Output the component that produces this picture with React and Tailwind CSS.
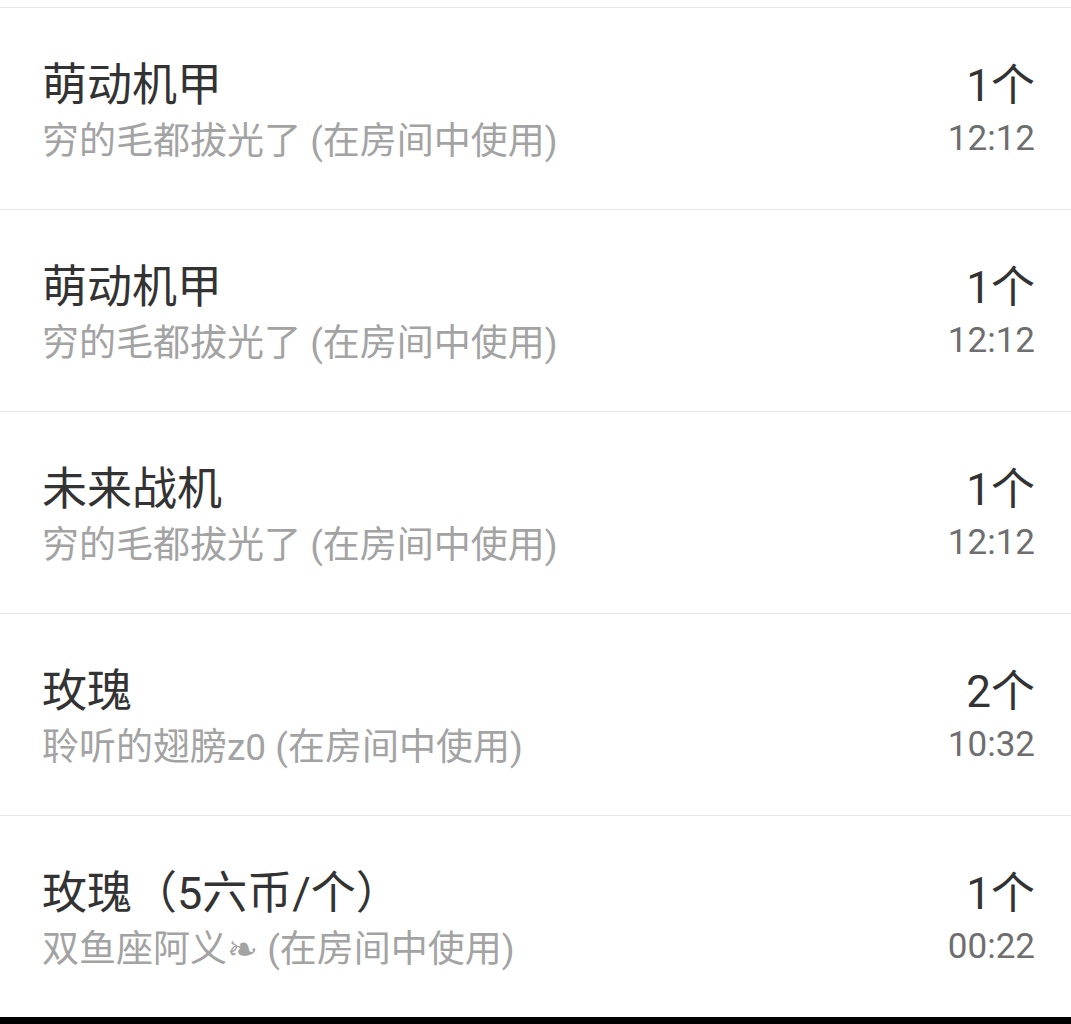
const ROWS = [
  { name: '萌动机甲', user: '穷的毛都拔光了', count: '1个', time: '12:12' },
  { name: '萌动机甲', user: '穷的毛都拔光了', count: '1个', time: '12:12' },
  { name: '未来战机', user: '穷的毛都拔光了', count: '1个', time: '12:12' },
  { name: '玫瑰', user: '聆听的翅膀z0', count: '2个', time: '10:32' },
  { name: '玫瑰（5六币/个）', user: '双鱼座阿义❧', count: '1个', time: '00:22' },
];

export default function App() {
  return (
    <div
      className="flex h-[1024px] w-full flex-col overflow-hidden bg-white"
      style={{ fontFamily: 'Roboto, "Noto Sans CJK SC", sans-serif' }}
    >
      <div className="h-[7px]" />
      {ROWS.map((r, i) => (
        <div key={i} className="flex h-[202px] justify-between border-t border-[#e6e6e6] pl-[42px] pr-[36px] pt-[50px]">
          <div>
            <div className="text-[45px] leading-[56px] text-[#333333]">{r.name}</div>
            <div className="text-[37px] leading-[56px] text-[#a3a3a3]">
              {r.user} (在房间中使用)
            </div>
          </div>
          <div className="text-right">
            <div className="text-[44px] leading-[56px] text-[#333333]">{r.count}</div>
            <div className="text-[35px] leading-[50px] text-[#6e6e6e]">{r.time}</div>
          </div>
        </div>
      ))}
      <div className="flex-1 bg-black" />
    </div>
  );
}
